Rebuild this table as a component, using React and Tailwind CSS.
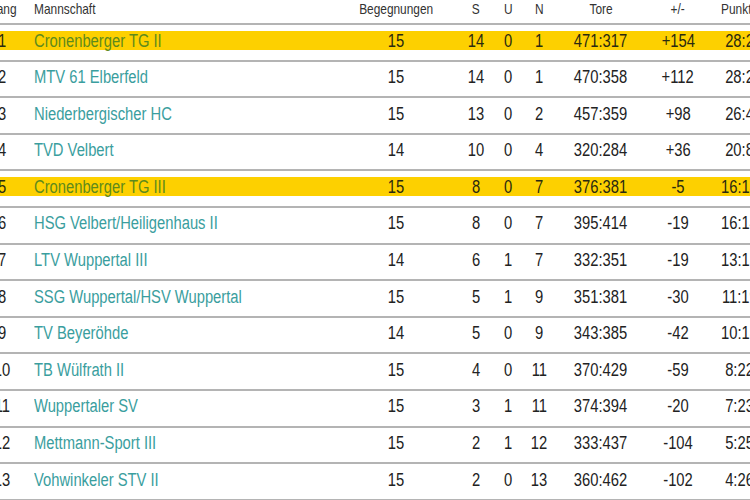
import React from "react";

const rows = [
  { rang: 1, team: "Cronenberger TG II", sp: 15, s: 14, u: 0, n: 1, tore: "471:317", diff: "+154", pkt: "28:2", hl: true },
  { rang: 2, team: "MTV 61 Elberfeld", sp: 15, s: 14, u: 0, n: 1, tore: "470:358", diff: "+112", pkt: "28:2" },
  { rang: 3, team: "Niederbergischer HC", sp: 15, s: 13, u: 0, n: 2, tore: "457:359", diff: "+98", pkt: "26:4" },
  { rang: 4, team: "TVD Velbert", sp: 14, s: 10, u: 0, n: 4, tore: "320:284", diff: "+36", pkt: "20:8" },
  { rang: 5, team: "Cronenberger TG III", sp: 15, s: 8, u: 0, n: 7, tore: "376:381", diff: "-5", pkt: "16:14", hl: true },
  { rang: 6, team: "HSG Velbert/Heiligenhaus II", sp: 15, s: 8, u: 0, n: 7, tore: "395:414", diff: "-19", pkt: "16:14" },
  { rang: 7, team: "LTV Wuppertal III", sp: 14, s: 6, u: 1, n: 7, tore: "332:351", diff: "-19", pkt: "13:15" },
  { rang: 8, team: "SSG Wuppertal/HSV Wuppertal", sp: 15, s: 5, u: 1, n: 9, tore: "351:381", diff: "-30", pkt: "11:19" },
  { rang: 9, team: "TV Beyeröhde", sp: 14, s: 5, u: 0, n: 9, tore: "343:385", diff: "-42", pkt: "10:18" },
  { rang: 10, team: "TB Wülfrath II", sp: 15, s: 4, u: 0, n: 11, tore: "370:429", diff: "-59", pkt: "8:22" },
  { rang: 11, team: "Wuppertaler SV", sp: 15, s: 3, u: 1, n: 11, tore: "374:394", diff: "-20", pkt: "7:23" },
  { rang: 12, team: "Mettmann-Sport III", sp: 15, s: 2, u: 1, n: 12, tore: "333:437", diff: "-104", pkt: "5:25" },
  { rang: 13, team: "Vohwinkeler STV II", sp: 15, s: 2, u: 0, n: 13, tore: "360:462", diff: "-102", pkt: "4:26" },
];

const cols = "grid grid-cols-[40px_318px_112px_48px_16px_46px_78px_76px_48px]";

// narrow look: the page font is condensed
const N = ({ children, left }) => (
  <span className={`inline-block whitespace-nowrap scale-x-[0.82] ${left ? "origin-left" : "origin-center"}`}>
    {children}
  </span>
);

const Cell = ({ children }) => (
  <div className="flex justify-center">
    <N>{children}</N>
  </div>
);

export default function App() {
  return (
    <div
      className="w-[750px] h-[500px] overflow-hidden bg-white"
      style={{ fontFamily: '"Liberation Sans", Arial, sans-serif' }}
    >
      <div className="ml-[-18px] w-[782px]">
        <div className={`${cols} h-[25px] items-start text-[14.5px] leading-[19px] text-[#333] border-b-2 border-[#b4b4b4]`}>
          <Cell>Rang</Cell>
          <div className="pl-[12px]">
            <N left>Mannschaft</N>
          </div>
          <Cell>Begegnungen</Cell>
          <Cell>S</Cell>
          <Cell>U</Cell>
          <Cell>N</Cell>
          <Cell>Tore</Cell>
          <Cell>+/-</Cell>
          <Cell>Punkte</Cell>
        </div>
        {rows.map((r) => (
          <div key={r.rang} className="h-[36.6px] pt-[6px] border-b-2 border-[#b4b4b4]">
            <div
              className={`${cols} h-[19px] items-center text-[18px] leading-none ${
                r.hl ? "bg-[#fdd000] text-[#2a2a10]" : "text-[#222]"
              }`}
            >
              <Cell>{r.rang}</Cell>
              <div className={`pl-[12px] ${r.hl ? "text-[#5e8a1c]" : "text-[#3a9e9e]"}`}>
                <N left>{r.team}</N>
              </div>
              <Cell>{r.sp}</Cell>
              <Cell>{r.s}</Cell>
              <Cell>{r.u}</Cell>
              <Cell>{r.n}</Cell>
              <Cell>{r.tore}</Cell>
              <Cell>{r.diff}</Cell>
              <Cell>{r.pkt}</Cell>
            </div>
          </div>
        ))}
      </div>
    </div>
  );
}
